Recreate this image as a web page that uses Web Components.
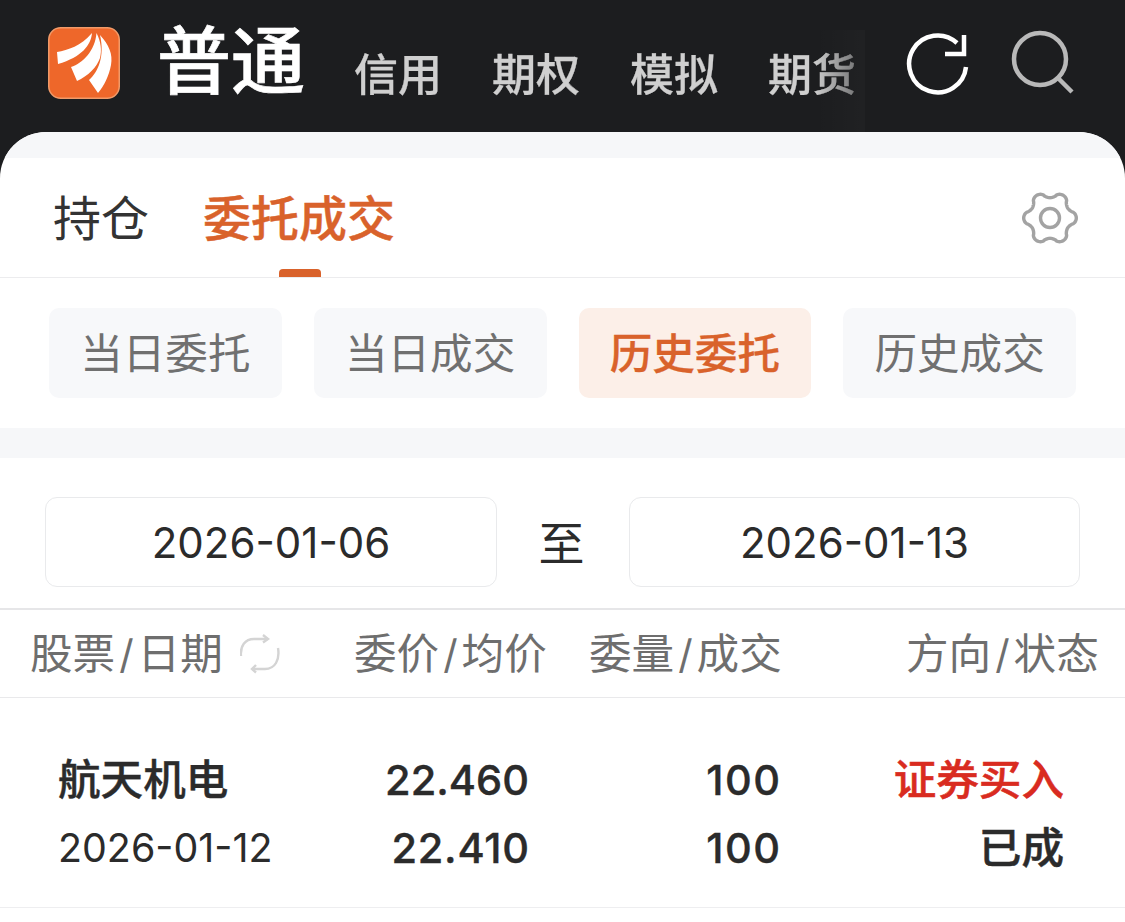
<!DOCTYPE html>
<html lang="zh">
<head>
<meta charset="utf-8">
<style>
  html, body { margin: 0; background: #fff; }
  body { font-family: Inter, "Noto Sans CJK SC", sans-serif; width: 1125px; height: 922px; overflow: hidden; background: #1c1d1f; }
  main-card { margin-top: -1px; }
</style>
</head>
<body>
<app-header></app-header>
<main-card>
  <position-tabs></position-tabs>
  <filter-chips></filter-chips>
  <date-range></date-range>
  <order-table>
    <order-row name="航天机电" date="2026-01-12" price="22.460" avg="22.410" qty="100" filled="100" side="证券买入" status="已成"></order-row>
  </order-table>
</main-card>

<script>
const CJK = '"Noto Sans CJK SC", sans-serif';
const NUM = 'Inter, "Noto Sans CJK SC", sans-serif';

class AppHeader extends HTMLElement {
  connectedCallback() {
    this.attachShadow({mode: "open"}).innerHTML = `
    <style>
      :host { display: flex; height: 133px; background: #1c1d1f; align-items: flex-start; font-family: ${CJK}; }
      .logo { width: 72px; height: 72px; margin: 27px 0 0 48px; flex: none; }
      .title { margin: 10px 0 0 37px; width: 197px; font-size: 74px; line-height: 92px; font-weight: 500; color: #fff; flex: none; white-space: nowrap; -webkit-text-stroke: .7px #fff; }
      nav { position: relative; width: 511px; margin-top: 40px; flex: none; }
      nav::after { content: ""; position: absolute; right: 0; top: -10px; width: 50px; height: 103px; background: linear-gradient(90deg, transparent, rgba(255,255,255,.02)); }
      .items { display: flex; gap: 50px; font-size: 44px; line-height: 64px; font-weight: 500; color: #cfcfcf; white-space: nowrap; -webkit-text-stroke: .3px #cfcfcf;
            -webkit-mask-image: linear-gradient(90deg, #000 90%, rgba(0,0,0,.45) 99%, rgba(0,0,0,.3) 100%); }
      .act { display: flex; margin-left: 40px; margin-top: 28px; gap: 41px; }
      .act svg:first-child { margin-top: 2px; }
      svg { display: block; flex: none; }
    </style>
    <svg class="logo" viewBox="0 0 72 72">
      <rect x=".75" y=".75" width="70.5" height="70.5" rx="12" fill="#ee672a" stroke="#f19a68" stroke-width="1.5"/>
      <path fill="#fff" d="M9 25C20 23 33 19 44 6C43 18 34 30 10 37Z"/>
      <path fill="#fff" d="M48.5 6C53 15 54 23 52 31C49 40 40 49 29 54L23 40C35 36 47 24 48.5 6Z"/>
      <path fill="#fff" d="M52 8C61 18 65 27 63 38C61 49 56 59 50 66L41 53C50 45 57 30 52 8Z"/>
    </svg>
    <div class="title">普通</div>
    <nav><div class="items"><span>信用</span><span>期权</span><span>模拟</span><span>期货</span></div></nav>
    <div class="act">
      <svg width="64" height="70" viewBox="0 0 64 70" fill="none" stroke="#fff" stroke-width="4.5">
        <path d="M61 37A28.5 28.5 0 1 1 52 13"/>
        <path d="M40 24H59V5"/>
      </svg>
      <svg width="66" height="70" viewBox="0 0 66 70" fill="none" stroke="#b9b9b9" stroke-width="4.5">
        <circle cx="30" cy="31" r="26"/>
        <path d="M48 50L62 64"/>
      </svg>
    </div>`;
  }
}

class MainCard extends HTMLElement {
  connectedCallback() {
    this.attachShadow({mode: "open"}).innerHTML = `
    <style>
      :host { display: block; height: 790px; background: #fff; border-radius: 46px 46px 0 0; overflow: hidden; }
      .band { height: 26px; background: #f6f7f9; }
    </style>
    <div class="band"></div>
    <slot></slot>`;
  }
}

class PositionTabs extends HTMLElement {
  connectedCallback() {
    this.attachShadow({mode: "open"}).innerHTML = `
    <style>
      :host { display: flex; height: 120px; box-sizing: border-box; border-bottom: 1px solid #ececee; padding: 24px 47px 0 53px; font-family: ${CJK}; font-size: 48px; line-height: 66px; justify-content: space-between; align-items: flex-start; }
      .left { display: flex; gap: 54px; color: #333; }
      .on { color: #d9622b; font-weight: 500; position: relative; height: 95px; -webkit-text-stroke: .4px #d9622b; }
      .on::after { content: ""; position: absolute; left: 76px; bottom: 0; width: 42px; height: 8px; border-radius: 4px 4px 0 0; background: #d9622b; }
      svg { display: block; margin-top: 8px; }
    </style>
    <div class="left"><span>持仓</span><span class="on">委托成交</span></div>
    <svg id="gear" width="56" height="56" viewBox="0 0 56 56" fill="none" stroke="#a3a3a3" stroke-width="3.4">
      <path id="outline"/>
      <circle cx="28" cy="28" r="9.5"/>
    </svg>`;
    let d = "";
    for (let i = 0; i < 180; i++) {
      const a = i / 180 * Math.PI * 2;
      const c = Math.cos(6 * a);
      const r = 23.3 + 3 * Math.sign(c) * Math.pow(Math.abs(c), 0.7);
      d += (i ? "L" : "M") + (28 + r * Math.cos(a)).toFixed(2) + " " + (28 + r * Math.sin(a)).toFixed(2);
    }
    this.shadowRoot.querySelector("#outline").setAttribute("d", d + "Z");
  }
}

class FilterChips extends HTMLElement {
  connectedCallback() {
    const items = ["当日委托", "当日成交", "历史委托", "历史成交"];
    this.attachShadow({mode: "open"}).innerHTML = `
    <style>
      :host { display: block; font-family: ${CJK}; border-bottom: 30px solid #f6f7f9; padding: 30px 49px; }
      .row { display: flex; gap: 32px; }
      .chip { width: 232.75px; flex: none; height: 90px; box-sizing: border-box; padding-bottom: 5px; border-radius: 10px; background: #f7f8fa; color: #707070; font-size: 42.6px; display: flex; align-items: center; justify-content: center; }
      .on { background: #fcefe8; color: #d9622b; font-weight: 500; -webkit-text-stroke: .3px #d9622b; }
    </style>
    <div class="row">${items.map((t, i) => `<div class="chip${i == 2 ? " on" : ""}">${t}</div>`).join("")}</div>`;
  }
}

class DateRange extends HTMLElement {
  connectedCallback() {
    this.attachShadow({mode: "open"}).innerHTML = `
    <style>
      :host { display: flex; align-items: center; padding: 39px 0 21px 45px; font-family: ${NUM}; color: #2b2b2b; }
      .box { width: 452px; height: 90px; flex: none; box-sizing: border-box; border: 1.5px solid #e9eaec; border-radius: 12px; display: flex; align-items: center; justify-content: center; font-size: 42px; }
      .box + .to + .box { width: 451px; }
      .to { width: 129px; padding-right: 3px; flex: none; text-align: center; font-family: ${CJK}; font-size: 46px; padding-bottom: 4px; }
    </style>
    <div class="box">2026-01-06</div>
    <div class="to">至</div>
    <div class="box">2026-01-13</div>`;
  }
}

class OrderTable extends HTMLElement {
  connectedCallback() {
    const label = (a, b) => `<span>${a}</span><i>/</i><span>${b}</span>`;
    this.attachShadow({mode: "open"}).innerHTML = `
    <style>
      :host { display: block; font-family: ${CJK}; }
      .head { display: flex; height: 90px; box-sizing: border-box; align-items: center; border-top: 2px solid #e6e6e8; border-bottom: 1px solid #e9e9eb; color: #6e6e6e; font-size: 42.6px; white-space: nowrap; padding: 0 0 0 30px; }
      .head > div > span, .head > div > i, .stock > .t { position: relative; top: -3px; }
      i { font-style: normal; font-family: Inter, sans-serif; font-weight: 400; font-size: 40px; margin: 0 4px; }
      .stock { width: 324px; display: flex; align-items: center; gap: 17px; }
      .c2 { width: 235px; }
      .c3 { width: 317px; }
      svg { display: block; }
    </style>
    <div class="head">
      <div class="stock"><div class="t">${label("股票", "日期")}</div>
        <svg width="42" height="40" viewBox="0 0 42 40" fill="none" stroke="#d4d4d4" stroke-width="2.4">
          <path d="M1 22C0 12 5 5 14 5H28"/><path d="M23 1L28 5L23 8.5"/>
          <path d="M38 14C40 26 35 35 25 35H12"/><path d="M16 31L12 35L16 38.5"/>
        </svg>
      </div>
      <div class="c2">${label("委价", "均价")}</div>
      <div class="c3">${label("委量", "成交")}</div>
      <div>${label("方向", "状态")}</div>
    </div>
    <slot></slot>`;
  }
}

class OrderRow extends HTMLElement {
  connectedCallback() {
    const a = n => this.getAttribute(n);
    this.attachShadow({mode: "open"}).innerHTML = `
    <style>
      :host { display: grid; grid-template-columns: 281px 190px 251px 284px; grid-auto-rows: 68px; height: 210px; box-sizing: border-box; padding: 48px 0 0 58px; border-bottom: 1px solid #eeeef0; align-items: center; font-family: ${NUM}; color: #2b2b2b; }
      .name { font-family: ${CJK}; font-size: 42.6px; font-weight: 500; padding-bottom: 7px; -webkit-text-stroke: .4px #2b2b2b; }
      .date { font-size: 39.4px; }
      .num { font-size: 41.5px; font-weight: 500; text-align: right; -webkit-text-stroke: .4px #2b2b2b; }
      .avg { letter-spacing: .7px; margin-right: -.7px; }
      .qty { letter-spacing: 1.5px; margin-right: -1.5px; }
      .side, .status { font-family: ${CJK}; font-size: 42.6px; font-weight: 500; text-align: right; padding-bottom: 7px; -webkit-text-stroke: .5px; }
      .side { color: #d92b20; }
    </style>
    <div class="name">${a("name")}</div><div class="num">${a("price")}</div><div class="num qty">${a("qty")}</div><div class="side">${a("side")}</div>
    <div class="date">${a("date")}</div><div class="num avg">${a("avg")}</div><div class="num qty">${a("filled")}</div><div class="status">${a("status")}</div>`;
  }
}

customElements.define("app-header", AppHeader);
customElements.define("main-card", MainCard);
customElements.define("position-tabs", PositionTabs);
customElements.define("filter-chips", FilterChips);
customElements.define("date-range", DateRange);
customElements.define("order-table", OrderTable);
customElements.define("order-row", OrderRow);
</script>
</body>
</html>
